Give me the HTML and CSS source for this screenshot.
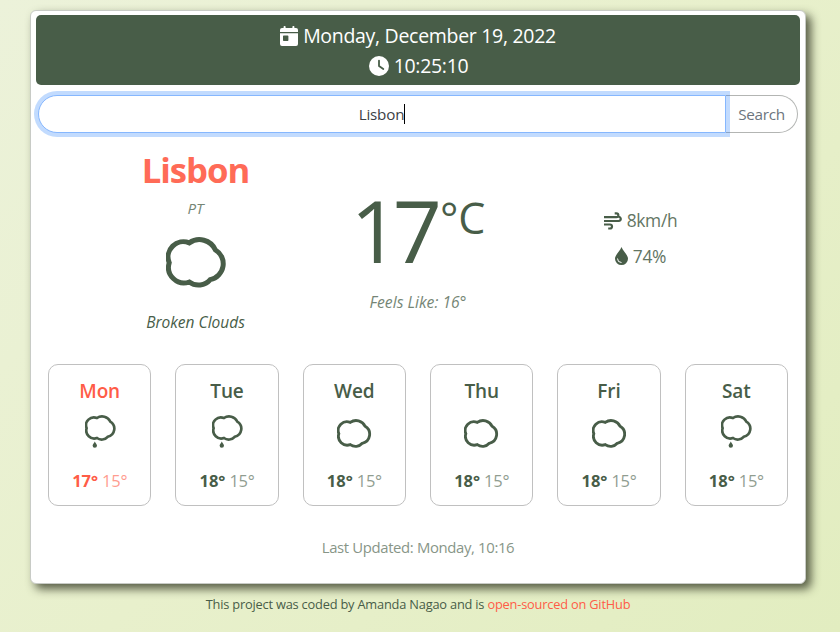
FILE: index.html
```html
<!DOCTYPE html>
<html lang="en">
<head>
<meta charset="utf-8">
<title>Weather</title>
<link rel="stylesheet" href="styles.css">
</head>
<body>
<svg class="defs" width="0" height="0">
  <symbol id="cloud" viewBox="0 0 60.8 51.2">
    <path d="M23.3 5.900A17.500 17.500 0 0 1 49.300 12.800A16.200 16.200 0 0 1 44.300 42.600A15.500 15.500 0 0 1 23.3 45A15.600 15.600 0 0 1 3.200 25.700A15.300 15.300 0 0 1 23.3 5.900Z" fill="none" stroke="currentColor" stroke-width="5"/>
  </symbol>
  <symbol id="rain" viewBox="0 0 31 33">
    <path transform="scale(.512)" d="M23.3 5.900A17.500 17.500 0 0 1 49.300 12.800A16.200 16.200 0 0 1 44.300 42.600A15.500 15.500 0 0 1 23.3 45A15.600 15.600 0 0 1 3.200 25.700A15.300 15.300 0 0 1 23.3 5.900Z" fill="none" stroke="currentColor" stroke-width="5.200"/>
    <path d="M9.8 26.4C10.6 28 12 29.2 12 30.6A2.2 2.2 0 0 1 7.6 30.6C7.6 29.2 9 28 9.8 26.4Z" fill="currentColor"/>
  </symbol>
</svg>
<main class="card">
  <header class="banner">
    <div class="line"><svg class="cal" viewBox="0 0 18 20"><path fill="currentColor" fill-rule="evenodd" d="M3.6 2V.8a.8.8 0 0 1 .8-.8h.4a.8.8 0 0 1 .8.8V2h6.800V.8a.8.8 0 0 1 .8-.8h.4a.8.8 0 0 1 .8.8V2H16a2 2 0 0 1 2 2v2H0V4a2 2 0 0 1 2-2ZM0 7.200h18V18a2 2 0 0 1-2 2H2a2 2 0 0 1-2-2ZM3 10.300v4a.7.7 0 0 0 .7.7h4a.7.7 0 0 0 .7-.7v-4a.7.7 0 0 0-.7-.7h-4a.7.7 0 0 0-.7.7Z"/></svg><span class="date">Monday, December 19, 2022</span></div>
    <div class="line clockline"><svg class="clock" viewBox="0 0 20 20"><circle cx="10" cy="10" r="10" fill="currentColor"/><path d="M10 4.600V10l4.300 3" fill="none" stroke="#485d48" stroke-width="1.800" stroke-linecap="round" stroke-linejoin="round"/></svg><span class="time">10:25:10</span></div>
  </header>
  <form class="search">
    <div class="field"><span>Lisbon</span><i class="caret"></i></div>
    <button type="button" class="go">Search</button>
  </form>
  <section class="now">
    <div class="col">
      <h1 class="city">Lisbon</h1>
      <div class="country">PT</div>
      <svg class="big"><use href="#cloud"/></svg>
      <div class="desc">Broken Clouds</div>
    </div>
    <div class="col">
      <div class="temp"><span class="num">17</span><span class="unit">°C</span></div>
      <div class="feels">Feels Like: 16°</div>
    </div>
    <div class="col stats">
      <div class="stat"><svg class="wind" viewBox="0 0 18 18"><path d="M10.700 1.300h1.700a1.950 1.950 0 0 1 0 3.900H0M0 9h14.600a2.150 2.150 0 1 0-1.500-3.700M0 12.500h6a2 2 0 0 1 0 4H4.200" fill="none" stroke="currentColor" stroke-width="2.200"/></svg><span class="wtext">8km/h</span></div>
      <div class="stat"><svg class="drop" viewBox="0 0 13 18"><path fill="currentColor" d="M6.500 0C7.800 3.600 13 8 13 11.700a6.500 6.300 0 0 1-13 0C0 8 5.200 3.600 6.500 0Z"/><path d="M2.500 11.500a4 4 0 0 0 4 4" fill="none" stroke="#fff" stroke-width="1"/></svg><span class="htext">74%</span></div>
    </div>
  </section>
  <section class="forecast">
    <article class="day today"><h2>Mon</h2><svg class="ri"><use href="#rain"/></svg><p><b>17°</b><span>15°</span></p></article>
    <article class="day"><h2>Tue</h2><svg class="ri"><use href="#rain"/></svg><p><b>18°</b><span>15°</span></p></article>
    <article class="day"><h2>Wed</h2><svg class="ci"><use href="#cloud"/></svg><p><b>18°</b><span>15°</span></p></article>
    <article class="day"><h2>Thu</h2><svg class="ci"><use href="#cloud"/></svg><p><b>18°</b><span>15°</span></p></article>
    <article class="day"><h2>Fri</h2><svg class="ci"><use href="#cloud"/></svg><p><b>18°</b><span>15°</span></p></article>
    <article class="day"><h2>Sat</h2><svg class="ri"><use href="#rain"/></svg><p><b>18°</b><span>15°</span></p></article>
  </section>
  <div class="updated">Last Updated: Monday, 10:16</div>
</main>
<footer class="foot">This project was coded by Amanda Nagao and is <a>open-sourced on GitHub</a></footer>
</body>
</html>
```
FILE: styles.css
```css
* { box-sizing: border-box; }
body {
  margin: 0;
  height: 632px;
  overflow: hidden;
  padding: 10px 34px 0 30px;
  font-family: "Open Sans", "Noto Sans", sans-serif;
  color: #485d48;
  background: linear-gradient(135deg, #ecf2da 0%, #e8f0cc 50%, #e2edc0 100%);
}
.defs { position: absolute; }
svg { display: block; flex: none; }
h1, h2, p { margin: 0; }
.card {
  width: 776px;
  height: 574px;
  padding: 4px 5px 0;
  background: #fff;
  border: 1px solid #c8cbc6;
  border-radius: 6px;
  box-shadow: 5px 5px 10px rgba(50, 55, 35, .8);
}
.banner {
  height: 70px;
  padding-top: 6px;
  border-radius: 5px;
  background: #485d48;
  color: #fff;
  font-size: 19.500px;
  letter-spacing: -.3px;
}
.line { display: flex; justify-content: center; align-items: center; height: 30px; line-height: 30px; }
.clockline { padding-left: 1px; }
.cal { width: 18px; height: 20px; margin-right: 5px; }
.clock { width: 20px; height: 20px; margin-right: 5px; }
.search { display: flex; margin: 10px 2px 0; height: 38px; }
.field {
  position: relative;
  z-index: 1;
  width: 688px;
  display: flex;
  justify-content: center;
  align-items: center;
  border: 1px solid #86b7fe;
  border-radius: 19px 0 0 19px;
  background: #fff;
  box-shadow: 0 0 0 4px rgba(13, 110, 253, .25);
  color: #3c4146;
  font-size: 15.200px;
  letter-spacing: -.2px;
}
.caret { width: 1px; height: 20px; background: #000; }
.go {
  flex: 1;
  padding: 0;
  border: 1px solid #b3b5b3;
  border-left: 0;
  border-radius: 0 19px 19px 0;
  background: #fff;
  color: #6c757d;
  font: 15.300px "Open Sans", sans-serif;
  letter-spacing: -.3px;
}
.now { display: grid; grid-template-columns: repeat(3, 222.5px); justify-content: center; height: 231px; }
.col { display: flex; flex-direction: column; align-items: center; white-space: nowrap; }
.city { margin-top: 15px; height: 45px; line-height: 44px; font-size: 34.700px; font-weight: 700; color: #ff6b57; letter-spacing: -1px; }
.country { height: 30px; line-height: 30px; font-size: 15.200px; font-style: italic; opacity: .75; }
.big { width: 60.8px; height: 51.2px; margin: 14px -1px 0 0; }
.desc { margin-top: 19px; height: 30px; line-height: 30px; font-size: 15.500px; font-style: italic; }
.temp { display: flex; margin-top: 43px; height: 108px; }
.num { font-size: 86px; line-height: 108px; letter-spacing: -7px; margin-right: 5px; }
.unit { font-size: 43px; line-height: 83px; letter-spacing: 0; }
.feels { margin-top: 3px; height: 30px; line-height: 30px; font-size: 15.700px; font-style: italic; opacity: .75; }
.stats { padding-top: 69px; }
.stat { display: flex; align-items: center; height: 36px; font-size: 17.400px; letter-spacing: -.3px; }
.stat span { opacity: .85; }
.wind { width: 18px; height: 18px; margin: 2px 5px 0 0; }
.drop { width: 13px; height: 18px; margin-right: 5px; }
.forecast { display: grid; grid-template-columns: repeat(6, 1fr); gap: 24px; padding: 0 12px; }
.day { height: 142px; border: 1px solid #c0c0c0; border-radius: 10px; display: flex; flex-direction: column; align-items: center; }
.day h2 { margin-top: 11px; height: 30px; line-height: 30px; font-size: 19px; font-weight: 600; letter-spacing: -.1px; }
.ri { width: 31px; height: 33px; margin: 9px -1px 18px 0; }
.ci { width: 34.7px; height: 29.2px; margin: 12.500px 0 18.300px; }
.day p { display: flex; gap: 4px; height: 30px; line-height: 30px; font-size: 16.500px; }
.day p span { opacity: .6; letter-spacing: -.3px; }
.today h2, .today p { color: #ff5c47; }
.updated { margin-top: 26px; height: 30px; line-height: 30px; font-size: 14.900px; letter-spacing: -.36px; text-align: center; opacity: .65; }
.foot { margin-top: 9px; height: 22px; line-height: 22px; font-size: 12.800px; letter-spacing: -.19px; text-align: center; white-space: nowrap; }
.foot a { color: #ff5c47; }
```
